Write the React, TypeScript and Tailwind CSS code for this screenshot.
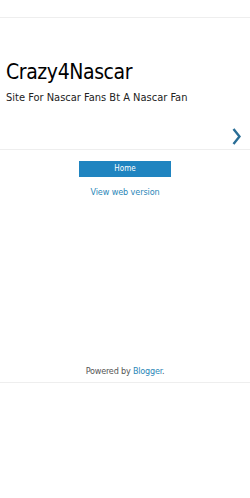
import React from "react";

export default function App() {
  return (
    <div className="w-[250px] h-[498px] bg-white" style={{ fontFamily: '"DejaVu Sans Condensed", "DejaVu Sans", sans-serif' }}>
      <div className="h-[17px]" />
      <div className="border-t border-[#eeeeee]" />
      <div className="px-[6px] pt-[40px]">
        <h1 className="text-[21px] leading-[28px] tracking-[-0.4px] text-black font-normal">Crazy4Nascar</h1>
        <p className="text-[11px] leading-[14px] text-[#222] mt-[5px]">Site For Nascar Fans Bt A Nascar Fan</p>
      </div>
      <div className="flex justify-end pr-[9px] pt-[23px] pb-[4px]">
        <svg width="9" height="17" viewBox="0 0 9 17">
          <path d="M1.5 1 L7.5 8.5 L1.5 16" stroke="#2a6e96" strokeWidth="2.4" fill="none" />
        </svg>
      </div>
      <div className="border-t border-[#eeeeee]" />
      <div className="flex flex-col items-center pt-[11px]">
        <div className="w-[92px] h-[16px] bg-[#1f84c0] text-white text-[8px] flex items-center justify-center">Home</div>
        <a className="text-[9px] tracking-[-0.1px] text-[#2c87b8] mt-[9px] leading-[12px]">View web version</a>
      </div>
      <div className="h-[167px]" />
      <div className="text-center text-[9px] tracking-[-0.2px] leading-[12px] text-[#555]">
        Powered by <span className="text-[#2c87b8]">Blogger</span>.
      </div>
      <div className="h-[5px]" />
      <div className="border-t border-[#eeeeee]" />
    </div>
  );
}
